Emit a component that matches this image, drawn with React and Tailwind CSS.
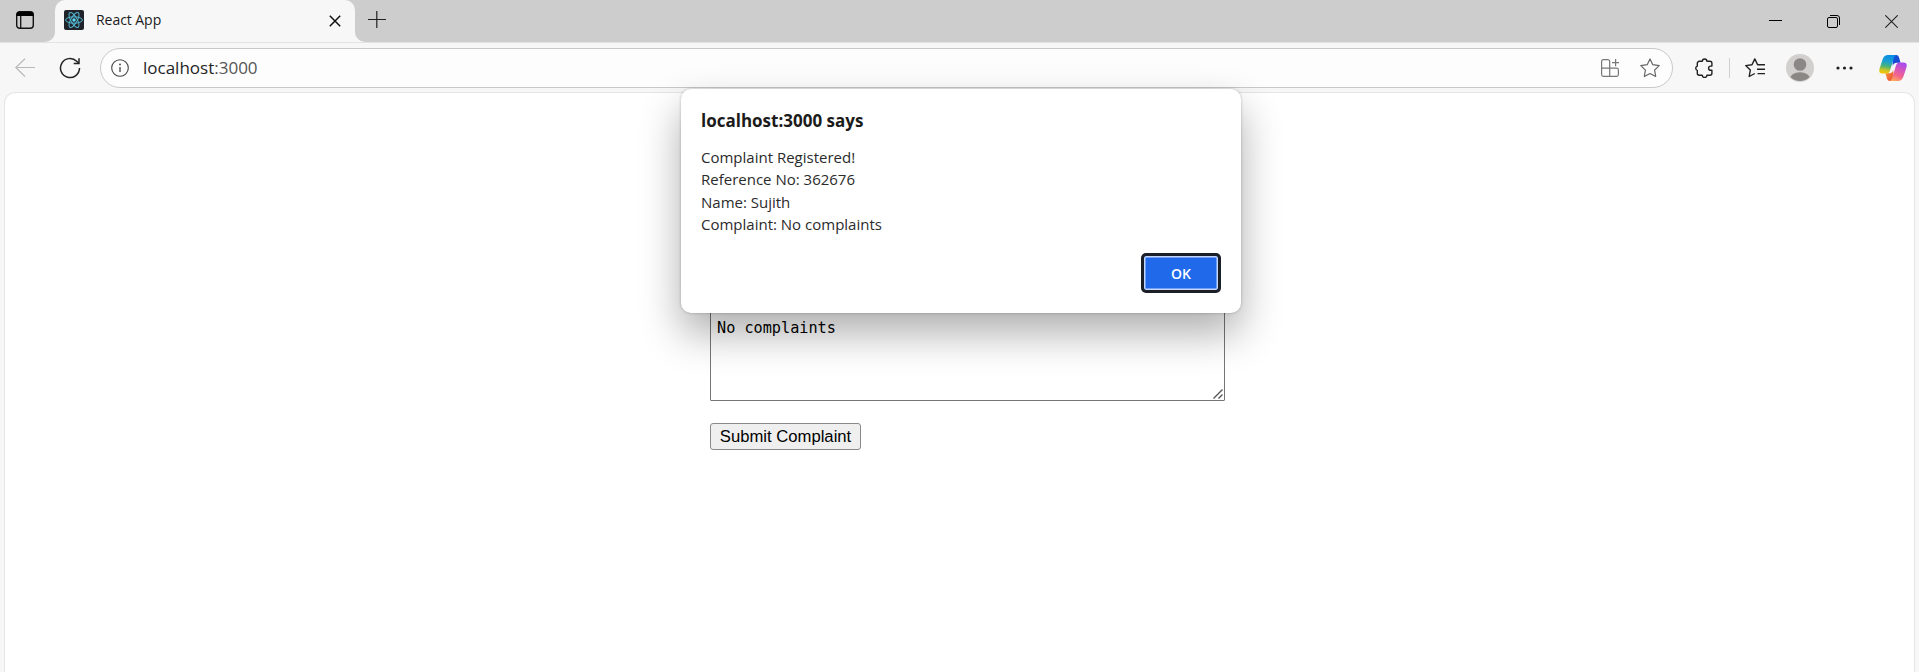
import React from "react";

function Copilot() {
  return (
    <svg width="28" height="26" viewBox="0 0 28 26" className="shrink-0">
      <defs>
        <linearGradient id="cpA" x1="0.5" y1="0" x2="0.35" y2="1">
          <stop offset="0" stopColor="#0a8ee6" />
          <stop offset="0.35" stopColor="#1a9fd0" />
          <stop offset="0.6" stopColor="#45b37c" />
          <stop offset="0.85" stopColor="#d3c51d" />
          <stop offset="1" stopColor="#f5c400" />
        </linearGradient>
        <linearGradient id="cpB" x1="0.7" y1="0" x2="0.3" y2="1">
          <stop offset="0" stopColor="#a44cf0" />
          <stop offset="0.4" stopColor="#d957b8" />
          <stop offset="0.7" stopColor="#f5668b" />
          <stop offset="1" stopColor="#ffa95c" />
        </linearGradient>
        <linearGradient id="cpC" x1="0" y1="0" x2="1" y2="1">
          <stop offset="0" stopColor="#0f5be0" />
          <stop offset="1" stopColor="#1c3fc4" />
        </linearGradient>
        <linearGradient id="cpD" x1="0" y1="0" x2="1" y2="1">
          <stop offset="0" stopColor="#f79a2e" />
          <stop offset="1" stopColor="#ea4a3c" />
        </linearGradient>
      </defs>
      <path d="M13 0h4c2 0 2.700 1.200 3.200 3l1.300 4.700h-3.500c-2.500 0-3.500 1-4.200 3.300z" fill="url(#cpC)" />
      <path d="M6.500 18.300H10c2.500 0 3.500-1 4.200-3.300L15 26h-4c-2 0-2.700-1.200-3.200-3z" fill="url(#cpD)" />
      <path d="M17.500 0H8.500C5.800 0 4.300 2.200 3.300 5.200L.9 12.500C-.6 17 .6 18.500 3.500 18.500h4c2.200 0 3-1.200 3.700-3.500l3.300-11C15.200 1.600 15.800.2 17.500 0z" fill="url(#cpA)" />
      <path d="M10.500 26h9c2.700 0 4.200-2.200 5.200-5.200l2.400-7.300c1.500-4.500.3-6-2.600-6h-4c-2.200 0-3 1.200-3.700 3.500l-3.300 11c-.7 2.400-1.300 3.800-3 4z" fill="url(#cpB)" />
    </svg>
  );
}

function TabStrip() {
  return (
    <div className="flex h-[42px] w-full bg-[#f7f7f7]">
      <div className="flex h-full w-[55px] items-start rounded-br-[10px] bg-[#cdcdcd] pl-4 pt-[11px]">
        <svg width="18" height="18" viewBox="0 0 18 18" fill="none">
          <rect x="0.7" y="0.7" width="16.600" height="16.600" rx="3" stroke="#111" strokeWidth="1.4" />
          <path d="M.7 5V3.500A2.800 2.800 0 0 1 3.500.7h11a2.800 2.800 0 0 1 2.800 2.800V5z" fill="#000" />
          <path d="M4.700 5v12" stroke="#111" strokeWidth="1.300" />
        </svg>
      </div>
      <div className="h-full w-[300px] bg-[#cdcdcd]">
        <div className="flex h-full w-full items-start rounded-t-[10px] bg-[#f7f7f7] pl-[9px]">
          <svg width="20" height="20" viewBox="0 0 20 20" fill="none" className="mt-[10px] shrink-0">
            <rect width="20" height="20" rx="2" fill="#20232a" />
            <g stroke="#53b8d3" strokeWidth="1">
              <ellipse cx="10" cy="10" rx="8.400" ry="3.200" />
              <ellipse cx="10" cy="10" rx="8.400" ry="3.200" transform="rotate(60 10 10)" />
              <ellipse cx="10" cy="10" rx="8.400" ry="3.200" transform="rotate(120 10 10)" />
            </g>
            <circle cx="10" cy="10" r="1.700" fill="#61dafb" />
          </svg>
          <span className="ml-3 mt-[9px] grow text-[14px] leading-[22px] tracking-[-0.05px] text-[#1b1b1b]">React App</span>
          <svg width="12" height="12" viewBox="0 0 12 12" className="mr-[14px] mt-[15px]" stroke="#111" strokeWidth="1.500">
            <path d="M.8.8l10.400 10.400M11.200.8L.8 11.200" />
          </svg>
        </div>
      </div>
      <div className="flex grow items-start rounded-bl-[10px] bg-[#cdcdcd] pl-[13px]">
        <svg width="18" height="18" viewBox="0 0 18 18" className="mt-[10px]" stroke="#222" strokeWidth="1.200">
          <path d="M0 9.500h18M8.800 1v17" />
        </svg>
        <div className="ml-auto flex pr-[21px] pt-[15px]">
          <svg width="13" height="13" viewBox="0 0 13 13" className="mr-[45px]">
            <path d="M0 5.500h13" stroke="#000" />
          </svg>
          <svg width="13" height="13" viewBox="0 0 13 13" className="mr-[45px]" fill="none" stroke="#000">
            <rect x=".5" y="2.500" width="10" height="10" rx="1.500" />
            <path d="M3 .5h7a2.500 2.500 0 0 1 2.500 2.500v7" />
          </svg>
          <svg width="13" height="13" viewBox="0 0 13 13" stroke="#222" strokeWidth="1.100">
            <path d="M.3.3l12.400 12.400M12.700.3L.3 12.700" />
          </svg>
        </div>
      </div>
    </div>
  );
}

function Toolbar() {
  return (
    <div className="flex h-[50px] w-full items-center border-t border-[#e3e3e3] pl-[15px] pr-3">
      <svg width="20" height="20" viewBox="0 0 20 20" fill="none" stroke="#b9b9b9" strokeWidth="1.200">
        <path d="M20 9.500H.8M10 .8L.8 9.500l9.200 9" />
      </svg>
      <svg width="22" height="22" viewBox="0 0 22 22" fill="none" stroke="#222" strokeWidth="1.500" className="ml-6 shrink-0">
        <path d="M20.500 11A9.500 9.500 0 1 1 17.700 4.300L19.700 6.300" />
        <path d="M20 1.200v5.300h-5.300" />
      </svg>
      <div className="ml-[19px] flex h-10 w-[1573px] shrink-0 items-center rounded-full border border-[#c9c9c9] bg-[#fdfdfd] pl-[10px] pr-3">
        <svg width="18" height="18" viewBox="0 0 18 18" fill="none" stroke="#444" strokeWidth="1.100">
          <circle cx="9" cy="9" r="8.300" />
          <path d="M9 8v5" strokeWidth="1.300" />
          <circle cx="9" cy="5.500" r=".9" fill="#444" stroke="none" />
        </svg>
        <span className="ml-[14px] grow text-[17px] leading-6 text-[#1f1f1f]">
          localhost<span className="text-[#555]">:3000</span>
        </span>
        <svg width="18" height="18" viewBox="0 0 18 18" fill="none" stroke="#777" strokeWidth="1.200" className="mr-[21px]">
          <path d="M8.700 9.200H.6V2.400A1.800 1.800 0 0 1 2.400.6h4.500a1.800 1.800 0 0 1 1.800 1.800zM.6 9.200h8.100v8.200H2.400a1.800 1.800 0 0 1-1.800-1.800zM8.700 9.200h6.900a1.800 1.800 0 0 1 1.800 1.800v4.600a1.800 1.800 0 0 1-1.800 1.800H8.700z" />
          <path d="M14.600 0v7.200M11 3.600h7" />
        </svg>
        <svg width="20" height="20" viewBox="0 0 20 20" fill="none" stroke="#666" strokeWidth="1.200" strokeLinejoin="round">
          <path d="M10 .9l2.800 5.800 6.400.9-4.600 4.500 1.100 6.400L10 15.500l-5.700 3 1.100-6.400L.8 7.600l6.400-.9z" />
        </svg>
      </div>
      <svg width="20" height="20" viewBox="0 0 20 20" fill="none" stroke="#222" strokeWidth="1.400" strokeLinejoin="round" className="ml-[21px] shrink-0">
        <path d="M8.300 3.300a2.300 2.300 0 0 1 4.600 0h3a2 2 0 0 1 2 2v2.800h-1.200a2.100 2.100 0 0 0 0 4.200h1.200v2.900a2 2 0 0 1-2 2h-3a2.300 2.300 0 0 1-4.600 0h-3a2 2 0 0 1-2-2v-2.900a2.200 2.200 0 0 1 0-4.200V5.300a2 2 0 0 1 2-2z" />
      </svg>
      <div className="ml-[15px] h-5 w-px shrink-0 bg-[#cfcfcf]" />
      <svg width="20" height="20" viewBox="0 0 20 20" fill="none" stroke="#222" strokeWidth="1.400" strokeLinejoin="round" className="ml-[15px] shrink-0">
        <path d="M13.500 6.700h-.9L9.800.9 7 6.700l-6.300.9 4.600 4.500-1.100 6.400 5.600-3M12.500 6.700H20M12 11.200h8M12.500 15.600H20" />
      </svg>
      <svg width="28" height="28" viewBox="0 0 28 28" className="ml-[21px] shrink-0">
        <defs>
          <clipPath id="avatarClip"><circle cx="14" cy="14" r="13" /></clipPath>
        </defs>
        <circle cx="14" cy="14" r="14" fill="#d2d0ce" />
        <g fill="#8b8784" clipPath="url(#avatarClip)">
          <circle cx="14" cy="10.500" r="6.300" />
          <ellipse cx="14" cy="25.500" rx="10.200" ry="7.300" />
        </g>
      </svg>
      <svg width="17" height="4" viewBox="0 0 17 4" fill="#222" className="ml-[22px] mr-[26px] shrink-0">
        <circle cx="2" cy="2" r="1.600" />
        <circle cx="8.500" cy="2" r="1.600" />
        <circle cx="15" cy="2" r="1.600" />
      </svg>
      <Copilot />
    </div>
  );
}

function AlertDialog() {
  return (
    <div className="absolute left-[681px] top-[89px] flex h-[224px] w-[560px] flex-col rounded-[10px] bg-white px-5 pb-5 pt-5 text-[#1b1b1b] shadow-[0_0_3px_rgba(0,0,0,0.25),0_20px_42px_rgba(0,0,0,0.32)]">
      <h1 className="text-[17px] font-bold leading-6">localhost:3000 says</h1>
      <p className="mt-[13px] whitespace-pre-line text-[15px] leading-[22.4px] text-[#2b2b2b]">
        {"Complaint Registered!\nReference No: 362676\nName: Sujith\nComplaint: No complaints"}
      </p>
      <button className="mt-auto flex h-10 w-20 items-center justify-center self-end rounded-[5px] border-[3px] border-[#1b1f28] bg-[#2169eb] text-[14px] font-semibold text-white shadow-[inset_0_0_0_1.5px_#c3d6fa]">
        OK
      </button>
    </div>
  );
}

export default function App() {
  return (
    <div className="relative flex h-[672px] w-[1919px] flex-col overflow-hidden bg-[#f7f7f7] font-['Open_Sans','Noto_Sans',sans-serif]">
      <TabStrip />
      <Toolbar />
      <main className="mx-1 flex grow flex-col items-start rounded-t-[11px] border border-b-0 border-[#e6e6e6] bg-white pl-[705px] pt-[209px]">
        <div className="relative h-[99px] w-[515px] rounded-[1px] border border-[#767676] bg-white pl-[6px] pt-[15px]">
          <span className="block font-['DejaVu_Sans_Mono',monospace] text-[15.2px] leading-5 text-black">No complaints</span>
          <svg width="10" height="10" viewBox="0 0 10 10" className="absolute bottom-px right-px" stroke="#555" strokeWidth="1.400">
            <path d="M.5 9.500l9-9M5.500 9.500l4-4" />
          </svg>
        </div>
        <button className="mt-[22px] h-[27px] w-[151px] rounded-[3px] border border-[#8a8a8a] bg-[#efefef] font-['Liberation_Sans',sans-serif] text-[16.67px] leading-[23px] text-black">
          Submit Complaint
        </button>
      </main>
      <AlertDialog />
    </div>
  );
}
